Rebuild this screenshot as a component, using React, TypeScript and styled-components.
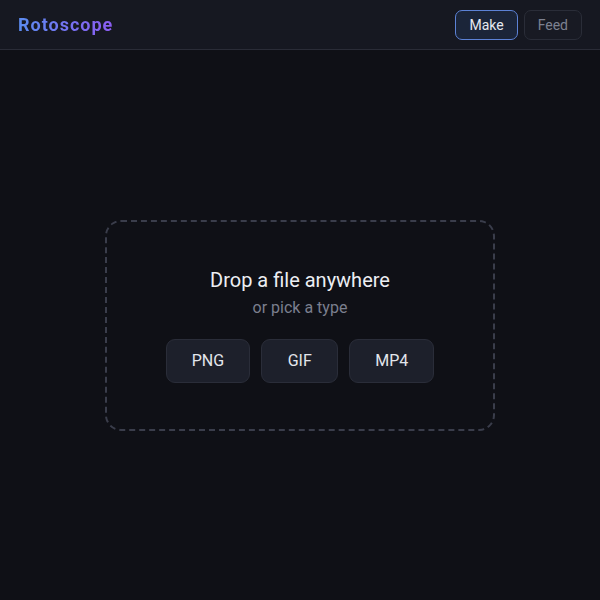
import styled, { createGlobalStyle } from "styled-components";

const GlobalStyle = createGlobalStyle`
  html, body {
    margin: 0;
    padding: 0;
    background: #0f1016;
    font-family: Roboto, "Liberation Sans", sans-serif;
  }
`;

const Page = styled.div`
  display: flex;
  flex-direction: column;
  height: 600px;
  background: #0f1016;
`;

const Header = styled.header`
  display: flex;
  align-items: center;
  justify-content: space-between;
  height: 49px;
  padding: 0 18px;
  background: #161821;
  border-bottom: 1px solid #2a2c37;
  flex-shrink: 0;
`;

const Logo = styled.div`
  font-size: 18px;
  font-weight: 700;
  letter-spacing: 1px;
  background: linear-gradient(90deg, #5b8cf0 0%, #8c5cf2 100%);
  -webkit-background-clip: text;
  background-clip: text;
  color: transparent;
`;

const Nav = styled.nav`
  display: flex;
  gap: 6px;
`;

const NavButton = styled.button<{ $active?: boolean }>`
  height: 30px;
  padding: 0 13px;
  border-radius: 7px;
  font-family: inherit;
  font-size: 14px;
  cursor: pointer;
  background: ${({ $active }) => ($active ? "#1b2539" : "#181a23")};
  border: 1px solid ${({ $active }) => ($active ? "#5c82d6" : "#2a2d38")};
  color: ${({ $active }) => ($active ? "#e6e9f0" : "#7d8190")};
`;

const Main = styled.main`
  flex: 1;
  display: flex;
  align-items: center;
  justify-content: center;
`;

const DropZone = styled.div`
  box-sizing: border-box;
  width: 390px;
  height: 211px;
  border: 2px dashed #3a3d4b;
  border-radius: 16px;
  display: flex;
  flex-direction: column;
  align-items: center;
  justify-content: center;
`;

const Title = styled.div`
  font-size: 20px;
  color: #eceef3;
  line-height: 24px;
`;

const Subtitle = styled.div`
  margin-top: 6px;
  font-size: 16px;
  color: #7b7f8e;
  line-height: 20px;
`;

const TypeRow = styled.div`
  display: flex;
  gap: 11px;
  margin-top: 21px;
`;

const TypeButton = styled.button`
  height: 44px;
  min-width: 77px;
  padding: 0 25px;
  border-radius: 9px;
  background: #1d202b;
  border: 1px solid #2a2d39;
  color: #e3e6ec;
  font-family: inherit;
  font-size: 16px;
  cursor: pointer;
`;

const fileTypes = ["PNG", "GIF", "MP4"];

const App = () => {
  return (
    <Page>
      <GlobalStyle />
      <Header>
        <Logo>Rotoscope</Logo>
        <Nav>
          <NavButton $active>Make</NavButton>
          <NavButton>Feed</NavButton>
        </Nav>
      </Header>
      <Main>
        <DropZone>
          <Title>Drop a file anywhere</Title>
          <Subtitle>or pick a type</Subtitle>
          <TypeRow>
            {fileTypes.map((t) => (
              <TypeButton key={t}>{t}</TypeButton>
            ))}
          </TypeRow>
        </DropZone>
      </Main>
    </Page>
  );
};

export default App;
